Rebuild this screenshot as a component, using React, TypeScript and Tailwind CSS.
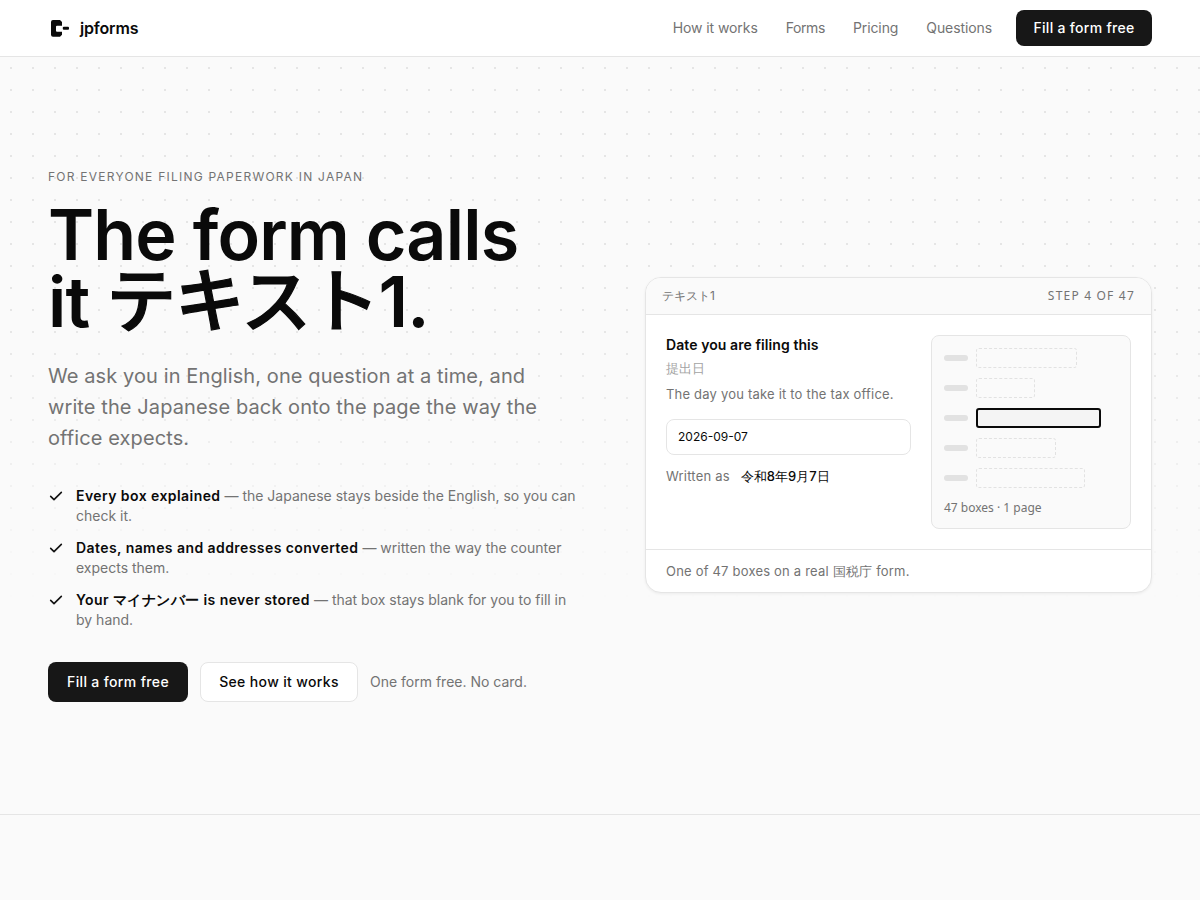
function Check() {
  return (
    <svg width="16" height="16" viewBox="0 0 24 24" fill="none" stroke="#111111" strokeWidth="2.4" strokeLinecap="round" strokeLinejoin="round" className="mt-[2px] shrink-0">
      <path d="M4 12.5l5 5L20 6.5" />
    </svg>
  );
}

function Logo() {
  return (
    <svg width="20" height="18" viewBox="0 0 20 18" fill="none">
      <path d="M3 1h7l2 2v3.7H7a1 1 0 0 0-1 1v4a1 1 0 0 0 1 1h5v3l-2 2H3a2 2 0 0 1-2-2V3a2 2 0 0 1 2-2z" fill="#0a0a0a" />
      <rect x="12.8" y="7.8" width="6.2" height="3" rx="1" fill="#0a0a0a" />
    </svg>
  );
}

function Row({ width, active }: { width: string; active?: boolean }) {
  return (
    <div className="flex items-center gap-2">
      <div className="h-[6px] w-6 rounded-[3px] bg-[#e2e2e2]" />
      <div className={active ? `h-5 rounded-[3px] border-2 border-[#0a0a0a] bg-[#f4f4f4] ${width}` : `h-5 rounded-[3px] border border-dashed border-[#e2e2e2] ${width}`} />
    </div>
  );
}

const items = [
  ["Every box explained", " — the Japanese stays beside the English, so you can check it."],
  ["Dates, names and addresses converted", " — written the way the counter expects them."],
  ["Your マイナンバー is never stored", " — that box stays blank for you to fill in by hand."],
];

export default function App() {
  return (
    <div className="min-h-[900px] bg-[#fafafa] font-['Inter',sans-serif]">
      <header className="flex h-[57px] items-center justify-between border-b border-[#e5e5e5] bg-white px-12">
        <div className="flex items-center gap-[10px]">
          <div className="ml-[2px]"><Logo /></div>
          <span className="text-base font-semibold tracking-[-0.16px] text-[#0a0a0a]">jpforms</span>
        </div>
        <nav className="flex items-center gap-7 text-sm text-[#737373]">
          <span className="tracking-[-0.08px]">How it works</span>
          <span className="tracking-[-0.4px]">Forms</span>
          <span className="tracking-[-0.1px]">Pricing</span>
          <span className="tracking-[-0.1px]">Questions</span>
          <span className="ml-[-4px] flex h-9 w-[136px] items-center justify-center rounded-lg bg-[#171717] font-medium tracking-[0.3px] text-white">Fill a form free</span>
        </nav>
      </header>

      <main className="relative grid h-[758px] grid-cols-[532px_507px] items-center justify-between border-b border-[#e5e5e5] px-12 pb-[2px]">
        <div className="pointer-events-none absolute inset-0 bg-[radial-gradient(circle,#e5e5e5_1px,transparent_1px)] bg-[size:22px_22px] [mask-image:linear-gradient(to_bottom,#000_35%,transparent_72%)]" />
        <div className="relative mt-[2px]">
          <p className="text-xs font-normal tracking-[1.24px] text-[#737373]">FOR EVERYONE FILING PAPERWORK IN JAPAN</p>
          <h1 className="mt-[17px] text-[70px] font-semibold leading-[66.5px] tracking-[-0.85px] text-[#0a0a0a]">The form calls<br />it <span className="font-['Noto_Sans_CJK_JP',sans-serif] font-medium leading-[0] tracking-[-1.4px] [-webkit-text-stroke:1.2px_#0a0a0a]">テキスト</span>1.</h1>
          <p className="mt-[26px] w-[520px] text-[20px] leading-[31px] tracking-[0.1px] text-[#737373]">We ask you in English, one question at a time, and write the Japanese back onto the page the way the office expects.</p>
          <ul className="mt-[32px] flex w-[532px] flex-col gap-3">
            {items.map(([b, r]) => (
              <li key={b} className="flex gap-3 text-sm leading-5 text-[#737373]">
                <Check />
                <span><strong className="font-semibold tracking-[0.43px] text-[#0a0a0a]">{b}</strong>{r}</span>
              </li>
            ))}
          </ul>
          <div className="mt-8 flex items-center gap-3 text-sm">
            <span className="flex h-10 w-[140px] items-center justify-center rounded-lg bg-[#171717] font-medium tracking-[0.35px] text-white">Fill a form free</span>
            <span className="flex h-10 w-[158px] items-center justify-center rounded-lg border border-[#e5e5e5] bg-white font-medium tracking-[0.35px] text-[#0a0a0a]">See how it works</span>
            <span className="text-[#737373]">One form free. No card.</span>
          </div>
        </div>

        <div className="relative overflow-hidden rounded-2xl border border-[#e5e5e5] bg-white shadow-[0_1px_3px_rgba(0,0,0,0.06)]">
          <div className="flex h-[37px] items-center justify-between border-b border-[#e5e5e5] bg-[#fafafa] px-4 text-xs text-[#737373]">
            <span>テキスト1</span>
            <span className="font-['Noto_Sans',sans-serif] tracking-[1.2px]">STEP 4 OF 47</span>
          </div>
          <div className="flex justify-between p-5">
            <div className="w-[245px]">
              <p className="text-sm font-semibold tracking-[0.08px] text-[#0a0a0a]">Date you are filing this</p>
              <p className="mt-[3px] text-[13px] leading-5 text-[#a3a3a3]">提出日</p>
              <p className="mt-[6px] text-[13px] leading-5 tracking-[0.2px] text-[#737373]">The day you take it to the tax office.</p>
              <div className="mt-[15px] flex h-9 items-center rounded-lg border border-[#e5e5e5] px-[11px] text-xs text-[#0a0a0a]">2026-09-07</div>
              <p className="mt-[11px] flex gap-[11px] text-[13px] leading-5 text-[#737373]"><span className="tracking-[0.2px]">Written as</span><span className="font-medium text-[#0a0a0a]">令和8年9月7日</span></p>
            </div>
            <div className="flex h-[194px] w-[200px] flex-col rounded-lg border border-[#e5e5e5] bg-[#fafafa] px-3 pt-3">
              <div className="flex flex-col gap-[10px]">
                <Row width="w-[101px]" />
                <Row width="w-[59px]" />
                <Row width="w-[125px]" active />
                <Row width="w-[80px]" />
                <Row width="w-[109px]" />
              </div>
              <p className="mt-[12px] font-['Noto_Sans',sans-serif] text-xs text-[#737373]">47 boxes · 1 page</p>
            </div>
          </div>
          <div className="flex h-[43px] items-center border-t border-[#e5e5e5] px-5 pt-[2px] text-[13px] tracking-[0.2px] text-[#737373]">One of 47 boxes on a real 国税庁 form.</div>
        </div>
      </main>
    </div>
  );
}
